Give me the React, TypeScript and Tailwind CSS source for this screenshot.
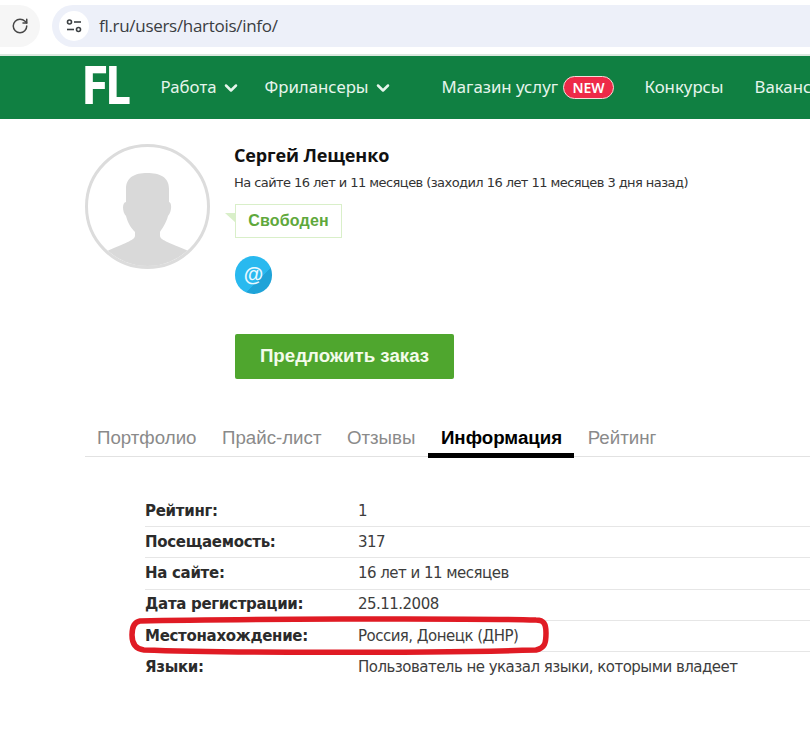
import { ChevronDown, RotateCw } from 'lucide-react';

const tabs = ['Портфолио', 'Прайс-лист', 'Отзывы', 'Информация', 'Рейтинг'];

const rows = [
  { label: 'Рейтинг:', value: '1' },
  { label: 'Посещаемость:', value: '317' },
  { label: 'На сайте:', value: '16 лет и 11 месяцев' },
  { label: 'Дата регистрации:', value: '25.11.2008' },
  { label: 'Местонахождение:', value: 'Россия, Донецк (ДНР)' },
  { label: 'Языки:', value: 'Пользователь не указал языки, которыми владеет' },
];

function NavItem({ label, chevron }: { label: string; chevron?: boolean }) {
  return (
    <div className="flex items-center gap-[4px] whitespace-nowrap text-[16.8px] leading-none text-[#e6f5ec]">
      {label}
      {chevron && <ChevronDown className="w-[20px] h-[20px]" strokeWidth={3} />}
    </div>
  );
}

export default function App() {
  return (
    <div className="relative w-[810px] h-[737px] overflow-hidden bg-white font-['Liberation_Sans',sans-serif]">
      {/* Browser bar */}
      <div className="h-[54px] flex items-start pt-[5px] gap-[12px] border-b border-white">
        <div className="w-[40px] h-[42px] rounded-r-full bg-[#f6f6f6] flex items-center justify-center">
          <RotateCw className="w-[18px] h-[18px] text-[#474747]" strokeWidth={2} />
        </div>
        <div className="flex-1 h-[42px] rounded-l-full bg-[#edf0f9] flex items-center pl-[7px] gap-[10px]">
          <div className="w-[30px] h-[30px] rounded-full bg-white flex items-center justify-center">
            <svg width="16" height="14" viewBox="0 0 16 14" fill="none" stroke="#3c4043" strokeWidth="1.6">
              <circle cx="3.5" cy="3" r="2" />
              <path d="M8 3h7" />
              <path d="M1 10.5h7" />
              <circle cx="12.5" cy="10.5" r="2" />
            </svg>
          </div>
          <div className="text-[17px] text-[#3a3d42] font-['Open_Sans',sans-serif] tracking-[-0.3px]">
            fl.ru/users/hartois/info/
          </div>
        </div>
      </div>

      {/* Green nav */}
      <div className="h-[65px] border-t-2 border-[#dbe8df] bg-[#108042] flex items-center pl-[83px]">
        <div className="w-[77.5px] shrink-0 text-[53px] leading-none font-black text-white font-['Roboto',sans-serif] origin-left scale-x-[0.82] pb-[2px]">FL</div>
        <div className="flex items-center font-['Noto_Sans',sans-serif]">
          <div className="w-[104px] shrink-0"><NavItem label="Работа" chevron /></div>
          <div className="w-[177px] shrink-0"><NavItem label="Фрилансеры" chevron /></div>
          <div className="w-[203px] shrink-0 flex items-center gap-[5px]">
            <NavItem label="Магазин услуг" />
            <span className="h-[23px] w-[51px] rounded-full bg-[#ee2a48] border border-[#f7dcd9] text-white text-[14px] font-semibold flex items-center justify-center">NEW</span>
          </div>
          <div className="w-[110px] shrink-0"><NavItem label="Конкурсы" /></div>
          <NavItem label="Вакансии" />
        </div>
      </div>

      {/* Profile */}
      <div className="flex pl-[85px] pt-[25px]">
        <div className="w-[125px] h-[125px] rounded-full border-[3px] border-[#dcdcdc] overflow-hidden shrink-0">
          <svg viewBox="3 3 119 119" className="w-full h-full">
            <path fill="#d9d9d9" d="M41 45C41 33 50 29 62 29C75 29 84 33 84 45L84 58C87 58 87 68 83 72C81 80 76 86 75 88L75 92C76 96 80 97 106 108L106 130L20 130L20 108C45 97 49 96 50 92L50 88C47 85 43 80 41 72C37 68 37 58 41 58Z" />
          </svg>
        </div>
        <div className="pl-[25px]">
          <div className="-ml-[1px] text-[18px] leading-[22px] font-bold text-[#111] font-['Open_Sans',sans-serif] tracking-[-0.13px]">Сергей Лещенко</div>
          <div className="-ml-[1px] mt-[8px] text-[13px] leading-[18px] text-[#333] font-['DejaVu_Sans',sans-serif] tracking-[-0.56px] whitespace-nowrap">
            На сайте 16 лет и 11 месяцев (заходил 16 лет 11 месяцев 3 дня назад)
          </div>
          <div className="relative mt-[12px] w-[107px] h-[34px] border border-[#d9efc9] flex items-center justify-center text-[16px] font-bold text-[#5fa83c] tracking-[0.2px]">
            Свободен
            <div className="absolute -left-[11px] top-[8px] w-0 h-0 border-t-[10px] border-t-[#d9efc9] border-l-[11px] border-l-transparent" />
          </div>
          <div className="mt-[18px] w-[37px] h-[38px] rounded-full bg-[linear-gradient(135deg,#29b9ef_64%,#1fa3d8_64%)] flex items-center justify-center text-[#e8f8ff] font-bold text-[20px] leading-none pb-[2px]">@</div>
          <div className="mt-[40px] w-[219px] h-[45px] rounded-[2px] bg-[#4fa62e] flex items-center justify-center text-[18.7px] font-bold text-[#f3fbea]">
            Предложить заказ
          </div>
        </div>
      </div>

      {/* Tabs */}
      <div className="ml-[85px] mt-[38px] h-[40px] border-b border-[#e2e2e2] flex items-start pl-[12px] gap-[25.5px] text-[18.7px] leading-[42px] text-[#8a8a8a]">
        {tabs.map((tab) =>
          tab === 'Информация' ? (
            <div key={tab} className="relative font-bold text-black">
              {tab}
              <div className="absolute -left-[13px] -right-[12px] top-[36px] h-[5px] bg-black" />
            </div>
          ) : (
            <div key={tab}>{tab}</div>
          )
        )}
      </div>

      {/* Info table */}
      <div className="ml-[145px] mt-[39px] text-[15px] font-['DejaVu_Sans',sans-serif]">
        {rows.map((row, i) => (
          <div key={row.label} className={`flex h-[31.2px] items-center ${i < rows.length - 1 ? 'border-b border-[#e6e6e6]' : ''}`}>
            <div className="w-[213px] font-bold text-[#2b2b2b] tracking-[-0.3px]">{row.label}</div>
            <div className="text-[#3d3d3d] tracking-[-0.52px] whitespace-nowrap">{row.value}</div>
          </div>
        ))}
      </div>

      {/* Red marker ring drawn over the row */}
      <svg className="absolute left-[128px] top-[615px]" width="424" height="44" viewBox="0 0 424 44" fill="none">
        <path
          d="M12 6C90 4 340 3 408 5C416 5 418 9 418 18C418 28 417 33 408 35C300 38 90 38 16 35C7 34 4 28 4 20C4 12 6 7 12 6Z"
          stroke="#e01b24"
          strokeWidth="5.5"
        />
      </svg>
    </div>
  );
}
